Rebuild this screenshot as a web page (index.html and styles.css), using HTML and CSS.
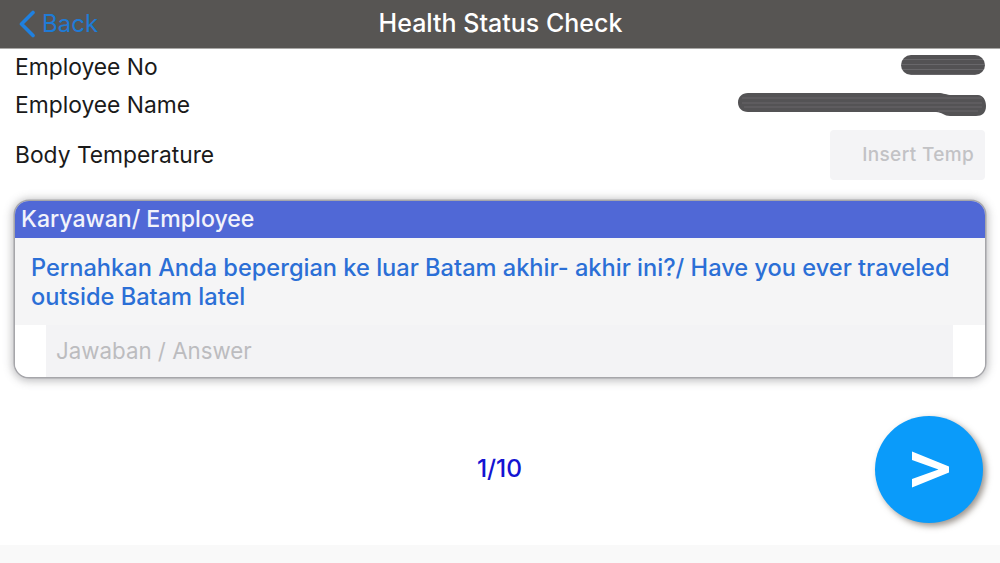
FILE: index.html
```html
<!DOCTYPE html>
<html lang="en">
<head>
<meta charset="utf-8">
<title>Health Status Check</title>
<link rel="stylesheet" href="styles.css">
</head>
<body>
<div class="screen">
  <header class="nav">
    <a class="back">
      <svg class="chev" width="18" height="28" viewBox="0 0 18 28"><path d="M15 2.5 3.5 14 15 25.5" fill="none" stroke="#1f80e0" stroke-width="3.6" stroke-linecap="round" stroke-linejoin="round"/></svg>
      <span>Back</span>
    </a>
    <h1 class="title">Health Status Check</h1>
  </header>
  <section class="info">
    <div class="row row-no"><span>Employee No</span><i class="mask mask-no"></i></div>
    <div class="row row-name"><span>Employee Name</span>
      <svg class="mask-name" width="248" height="26" viewBox="0 0 248 26"><path d="M10 1H200C206 1 208 3 214 3H240C245 3 248 8 248 14 248 21 244 24 238 24H212C206 24 204 20 198 20H10C4 20 0 16 0 10.500 0 5 4 1 10 1Z" fill="#545355"/><path d="M4 6H244M4 11H244M6 15H244M200 19H240" stroke="#68676a" stroke-width="1" fill="none"/></svg>
    </div>
    <div class="row row-temp"><span>Body Temperature</span><div class="temp">Insert Temp</div></div>
  </section>
  <section class="card">
    <div class="card-head">Karyawan/ Employee</div>
    <p class="question">Pernahkan Anda bepergian ke luar Batam akhir- akhir ini?/ Have you ever traveled outside Batam latel</p>
    <div class="answer">Jawaban / Answer</div>
  </section>
  <section class="pager">
    <span class="count">1/10</span>
    <button class="next"><svg width="40" height="40" viewBox="0 0 40 40"><path d="M2 2.500 39 17.500V23.500L2 38.500V30L28.500 20.500 2 11Z" fill="#fff"/></svg></button>
  </section>
  <div class="foot"></div>
</div>
</body>
</html>
```
FILE: styles.css
```css
* { box-sizing: border-box; }
html, body { margin: 0; padding: 0; }
body { width: 1000px; height: 563px; overflow: hidden; background: #fff; font-family: Inter, "Liberation Sans", sans-serif; color: #1a1a1a; }
.screen { height: 563px; display: flex; flex-direction: column; }
.nav { height: 49px; flex: none; background: #575553; border-bottom: 1px solid #a9a8a6; display: flex; align-items: center; justify-content: center; position: relative; }
.title { margin: 0 0 2px 1px; font-size: 25px; font-weight: 500; color: #fff; }
.back { position: absolute; left: 18px; top: 9px; display: flex; align-items: center; gap: 6px; color: #1f7bd6; font-size: 24px; }
.info { padding: 0 15px 0 15px; flex: none; }
.row { display: flex; justify-content: space-between; align-items: center; font-size: 22.800px; }
.row-no { height: 35px; margin-bottom: 1px; }
.row-name { height: 39px; margin-bottom: 1px; }
.row-temp { height: 53px; margin-top: 4px; }
.mask { display: block; background: repeating-linear-gradient(180deg, #535254 0 4px, #68676a 4px 5px); border-radius: 10px; }
.mask-no { width: 84px; height: 20px; margin-top: -3px; }
.mask-name { display: block; margin: 0 -1px 0 0; }
.temp { width: 155px; height: 50px; background: #f4f4f6; border-radius: 4px; color: #c2c2c5; font-size: 19px; font-weight: 500; text-align: right; padding: 13px 11px 0 0; letter-spacing: .35px; }
.card { margin: 20px 15px 0; height: 176px; flex: none; background: #f5f5f6; border-radius: 14px; overflow: hidden; box-shadow: 0 0 0 1.500px #a6a6aa, 0 1px 8px 3px rgba(110,110,115,.45); display: flex; flex-direction: column; position: relative; }
.card-head { height: 37px; flex: none; background: #5068d6; color: #f2f3fb; font-size: 23.100px; font-weight: 500; padding: 4px 0 0 6px; }
.question { margin: 0; padding: 15px 30px 0 16px; color: #2b6fd6; font-size: 23.600px; font-weight: 500; line-height: 29px; flex: none; height: 87px; }
.answer { flex: 1; margin: 0 32px 0 31px; padding: 12px 0 0 10px; background: #f3f3f5; color: #bcbcbf; font-size: 22.300px; box-shadow: -31px 0 0 #fff, 32px 0 0 #fff; }
.pager { flex: 1; position: relative; display: flex; justify-content: center; padding-top: 77px; }
.count { color: #1414d2; font-size: 24.500px; font-weight: 500; line-height: 28px; margin-left: -1px; }
.next { position: absolute; right: 17px; top: 39px; width: 108px; height: 107px; border: 0; padding: 0 0 1px 2px; border-radius: 50%; background: #0a9bfa; box-shadow: 3px 3px 6px rgba(90,80,70,.6); display: flex; align-items: center; justify-content: center; }
.foot { height: 18px; flex: none; background: #f9f9f9; }
```
